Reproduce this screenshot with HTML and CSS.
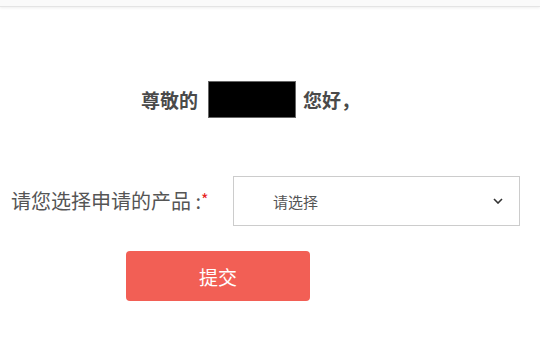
FILE: index.html
```html
<!DOCTYPE html>
<html lang="zh-CN">
<head>
<meta charset="utf-8">
<link rel="stylesheet" href="styles.css">
</head>
<body>
<div class="topbar"></div>
<main class="content">
  <div class="greeting">
    <span class="greet-text">尊敬的</span>
    <span class="name-mask"></span>
    <span class="greet-text after">您好，</span>
  </div>
  <div class="form-row">
    <label class="field-label">请您选择申请的产品 :<span class="req">*</span></label>
    <div class="select">
      <span class="select-text">请选择</span>
      <svg class="chevron" width="10" height="6" viewBox="0 0 10 6"><path d="M1 1 L5 5 L9 1" fill="none" stroke="#333" stroke-width="1.6"/></svg>
    </div>
  </div>
  <div class="actions">
    <button class="submit">提交</button>
  </div>
</main>
</body>
</html>
```
FILE: styles.css
```css
html, body {
  margin: 0;
  padding: 0;
  background: #fff;
  font-family: "Noto Sans CJK SC", "Noto Sans", sans-serif;
}
.topbar {
  height: 6px;
  background: #fafafa;
  border-bottom: 1px solid #e4e4e4;
  box-shadow: 0 1px 3px rgba(0,0,0,0.07);
}
.content {
  padding-top: 74px;
}
.greeting {
  display: flex;
  align-items: center;
  height: 37px;
  padding-left: 141px;
}
.greet-text {
  font-size: 19px;
  font-weight: bold;
  color: #4a4a4a;
  line-height: 1;
}
.name-mask {
  width: 86px;
  height: 35px;
  background: #000;
  border: 1px solid #666;
  margin: 0 7px 0 10px;
}
.form-row {
  display: flex;
  align-items: center;
  margin-top: 58px;
}
.field-label {
  padding-left: 11px;
  font-size: 20px;
  color: #555;
  line-height: 1;
  width: 203px;
}
.req {
  color: #e62222;
  font-size: 16px;
  vertical-align: top;
}
.select {
  margin-left: 19px;
  width: 230px;
  height: 48px;
  border: 1px solid #cccccc;
  display: flex;
  align-items: center;
  justify-content: space-between;
  padding: 0 16px 0 39px;
}
.select-text {
  font-size: 15px;
  color: #555;
}
.chevron {
  display: block;
}
.actions {
  margin-top: 25px;
  padding-left: 126px;
}
.submit {
  width: 184px;
  height: 50px;
  background: #f25f55;
  border: none;
  border-radius: 4px;
  color: #fff;
  font-family: "Noto Sans CJK SC", sans-serif;
  font-size: 19px;
  padding: 0;
}
```
